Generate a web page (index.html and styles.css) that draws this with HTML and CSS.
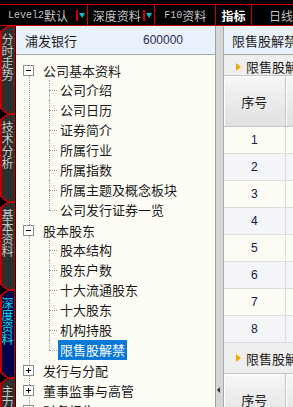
FILE: index.html
```html
<!DOCTYPE html>
<html lang="zh-CN">
<head>
    <meta charset="UTF-8">
    <meta name="viewport" content="width=device-width, initial-scale=1.0">
    <title>F10资料 - 限售股解禁</title>
    <link rel="stylesheet" href="styles.css">
</head>
<body>
    <!-- 顶部工具条 -->
    <div class="toolbar">
        <div class="tool tool-level"><span class="mono">Level2</span>默认<span class="caret"></span></div>
        <div class="tool tool-deep">深度资料<span class="caret"></span></div>
        <div class="tool tool-f10"><span class="mono">F10</span>资料</div>
        <div class="tool tool-active">指标</div>
        <div class="tool tool-day">日线</div>
    </div>

    <div class="main">
        <!-- 左侧竖排标签 -->
        <div class="side-tabs">
            <div class="side-tab"><span>分时走势</span></div>
            <div class="side-tab"><span>技术分析</span></div>
            <div class="side-tab"><span>基本资料</span></div>
            <div class="side-tab active"><span>深度资料</span></div>
            <div class="side-tab last"><span>主力监控</span></div>
        </div>

        <!-- 资料目录 -->
        <div class="tree-panel">
            <div class="stock-head">
                <span>浦发银行</span>
                <span class="stock-code">600000</span>
            </div>
            <ul class="tree">
                <li class="node">
                    <div class="node-label"><span class="toggle open"></span>公司基本资料</div>
                    <ul class="leaves">
                        <li>公司介绍</li>
                        <li>公司日历</li>
                        <li>证券简介</li>
                        <li>所属行业</li>
                        <li>所属指数</li>
                        <li>所属主题及概念板块</li>
                        <li>公司发行证券一览</li>
                    </ul>
                </li>
                <li class="node">
                    <div class="node-label"><span class="toggle open"></span>股本股东</div>
                    <ul class="leaves">
                        <li>股本结构</li>
                        <li>股东户数</li>
                        <li>十大流通股东</li>
                        <li>十大股东</li>
                        <li>机构持股</li>
                        <li><span class="selected">限售股解禁</span></li>
                    </ul>
                </li>
                <li class="node">
                    <div class="node-label"><span class="toggle"></span>发行与分配</div>
                </li>
                <li class="node">
                    <div class="node-label"><span class="toggle"></span>董事监事与高管</div>
                </li>
                <li class="node">
                    <div class="node-label"><span class="toggle"></span>财务报告</div>
                </li>
            </ul>
        </div>

        <div class="splitter">
            <div class="grip"></div>
        </div>

        <!-- 右侧明细 -->
        <div class="detail">
            <div class="detail-head">限售股解禁</div>

            <div class="group">
                <div class="group-title"><span class="arrow"></span>限售股解禁明细</div>
                <table class="grid">
                    <thead>
                        <tr><th>序号</th><th>解禁日期</th><th>解禁数量</th></tr>
                    </thead>
                    <tbody>
                        <tr><td>1</td><td></td><td></td></tr>
                        <tr><td>2</td><td></td><td></td></tr>
                        <tr><td>3</td><td></td><td></td></tr>
                        <tr><td>4</td><td></td><td></td></tr>
                        <tr><td>5</td><td></td><td></td></tr>
                        <tr><td>6</td><td></td><td></td></tr>
                        <tr><td>7</td><td></td><td></td></tr>
                        <tr><td>8</td><td></td><td></td></tr>
                    </tbody>
                </table>
            </div>

            <div class="group">
                <div class="group-title group-title-tall"><span class="arrow"></span>限售股解禁股东</div>
                <table class="grid">
                    <thead>
                        <tr><th>序号</th><th>股东名称</th><th>解禁数量</th></tr>
                    </thead>
                </table>
            </div>
        </div>
    </div>
</body>
</html>
```

FILE: styles.css
```css
* {
    box-sizing: border-box;
    margin: 0;
    padding: 0;
}

html, body {
    width: 100%;
    height: 100%;
    overflow: hidden;
}

body {
    background-color: #000;
    font-family: "Noto Sans CJK SC", "Noto Sans", sans-serif;
    font-size: 13px;
    color: #1a1a1a;
    display: flex;
    flex-direction: column;
}

/* 顶部工具条 */
.toolbar {
    height: 22px;
    margin-top: 4px;
    flex-shrink: 0;
    display: flex;
    border-top: 1px solid #d00000;
    border-bottom: 1px solid #d00000;
    background-color: #000;
    font-size: 12px;
    color: #c4c4c4;
    white-space: nowrap;
}

.tool {
    height: 100%;
    display: flex;
    align-items: center;
    border-right: 1px solid #d00000;
}

.mono {
    font-family: "Liberation Mono", monospace;
    font-size: 10px;
}

.tool-level {
    width: 88px;
    padding-left: 8px;
}

.tool-deep {
    width: 68px;
    padding-left: 5px;
}

.tool-f10 {
    width: 61px;
    justify-content: center;
}

.tool-active {
    width: 36px;
    justify-content: center;
    color: #fff;
    font-weight: bold;
}

.tool-day {
    flex: 1;
    padding-left: 17px;
    border-right: none;
}

/* 下拉箭头 */
.caret {
    margin-left: auto;
    margin-right: 1px;
    height: 11px;
    width: 10px;
    display: flex;
    align-items: center;
    border-left: 2px solid #d00000;
    padding-left: 1px;
}

.caret::after {
    content: "";
    border-left: 3px solid transparent;
    border-right: 3px solid transparent;
    border-top: 5px solid #00c4cc;
}

/* 主区域 */
.main {
    flex: 1;
    display: flex;
    min-height: 0;
}

/* 左侧竖排标签 */
.side-tabs {
    width: 16px;
    flex-shrink: 0;
    display: flex;
    flex-direction: column;
    background-color: #000;
    border-right: 1px solid #000;
}

.side-tab {
    height: 88px;
    flex-shrink: 0;
    padding: 1px 0;
    background-color: #c00000;
    clip-path: polygon(7px 0, 100% 0, 100% 100%, 7px 100%, 0 calc(100% - 5px), 0 5px);
}

.side-tab.last {
    flex: 1;
}

.side-tab span {
    display: block;
    height: 100%;
    padding: 6px 0 0 1px;
    background-color: #2e2e2e;
    clip-path: polygon(8px 0, 100% 0, 100% 100%, 8px 100%, 2px calc(100% - 5px), 2px 5px);
    writing-mode: vertical-rl;
    text-orientation: upright;
    font-size: 12px;
    line-height: 13px;
    color: #c8c8c8;
}

.side-tab.active span {
    background-color: #00004a;
    color: #00e4e4;
}

/* 资料目录 */
.tree-panel {
    width: 200px;
    flex-shrink: 0;
    display: flex;
    flex-direction: column;
    background-color: #fdfdf5;
    border-right: 1px solid #a0a0a0;
    overflow: hidden;
}

.stock-head {
    height: 29px;
    flex-shrink: 0;
    display: flex;
    align-items: center;
    justify-content: space-between;
    padding: 0 32px 0 9px;
    background-color: #e9f1fc;
    border-bottom: 1px solid #a8a8a8;
}

.stock-code {
    font-family: "Liberation Sans", sans-serif;
    font-size: 12px;
    color: #2c2c5a;
}

.tree {
    list-style: none;
    padding: 5px 0 0 7px;
    background-image: repeating-linear-gradient(to bottom, #9a9a9a 0 1px, transparent 1px 2px);
    background-size: 1px 100%;
    background-position: 13px 21px;
    background-repeat: no-repeat;
}

.node-label {
    height: 20px;
    display: flex;
    align-items: center;
    white-space: nowrap;
}

/* 展开/折叠方框 */
.toggle {
    position: relative;
    width: 11px;
    height: 11px;
    margin-right: 9px;
    flex-shrink: 0;
    border: 1px solid #8c8c8c;
    background-color: #fff;
}

.toggle::before {
    content: "";
    position: absolute;
    left: 2px;
    top: 4px;
    width: 5px;
    height: 1px;
    background-color: #000;
}

.toggle::after {
    content: "";
    position: absolute;
    left: 4px;
    top: 2px;
    width: 1px;
    height: 5px;
    background-color: #000;
}

.toggle.open::after {
    display: none;
}

.leaves {
    list-style: none;
    margin-left: 26px;
}

.leaves li {
    position: relative;
    height: 20px;
    line-height: 20px;
    padding-left: 11px;
    white-space: nowrap;
}

.leaves li::before {
    content: "";
    position: absolute;
    left: 0;
    top: 0;
    height: 100%;
    border-left: 1px dotted #9a9a9a;
}

.leaves li:last-child::before {
    height: 50%;
}

.leaves li::after {
    content: "";
    position: absolute;
    left: 0;
    top: 50%;
    width: 8px;
    border-top: 1px dotted #9a9a9a;
}

.selected {
    display: inline-block;
    height: 20px;
    line-height: 20px;
    margin-left: -2px;
    padding: 0 2px;
    background-color: #0a78d6;
    color: #fff;
}

/* 分隔条 */
.splitter {
    width: 8px;
    flex-shrink: 0;
    display: flex;
    flex-direction: column;
    justify-content: flex-end;
    background-color: #d6d6d6;
    border-right: 1px solid #a8a8a8;
}

.grip {
    position: relative;
    width: 4px;
    height: 20px;
    margin-left: 1px;
    background-image: radial-gradient(#606060 40%, transparent 45%);
    background-size: 2px 2px;
    background-position: 0 6px;
}

.grip::before {
    content: "";
    position: absolute;
    left: 0;
    top: 0;
    border-top: 3px solid transparent;
    border-bottom: 3px solid transparent;
    border-right: 3px solid #303030;
}

/* 右侧明细 */
.detail {
    flex: 1;
    min-width: 0;
    overflow: hidden;
    background-color: #fdfdf6;
    white-space: nowrap;
}

.detail-head {
    height: 29px;
    display: flex;
    align-items: center;
    padding-left: 8px;
    background-color: #e9f1fc;
    border-bottom: 1px solid #a8a8a8;
}

.group-title {
    height: 20px;
    display: flex;
    align-items: center;
    padding: 3px 0 0 12px;
    background-color: #efefef;
}

.group-title-tall {
    height: 30px;
    padding-top: 0;
}

.arrow {
    margin-right: 5px;
    border-left: 5px solid #f5a800;
    border-top: 4px solid transparent;
    border-bottom: 4px solid transparent;
}

.grid {
    width: 400px;
    table-layout: fixed;
    border-collapse: collapse;
}

.grid th,
.grid td {
    border: 1px solid #dcdcdc;
    text-align: center;
}

.grid th:first-child,
.grid td:first-child {
    width: 61px;
    border-left: none;
}

.grid th {
    height: 51px;
    font-weight: normal;
    color: #1a1a1a;
    background: linear-gradient(#f6f6f6, #e0e0e0);
    border-color: #c4c4c4;
    box-shadow: inset 1px 1px 0 #fff;
}

.grid td {
    height: 27px;
    font-family: "Liberation Sans", sans-serif;
    font-size: 12px;
    color: #14144a;
}

.grid tbody tr:nth-child(even) td {
    background-color: #f4f5f8;
}
```
